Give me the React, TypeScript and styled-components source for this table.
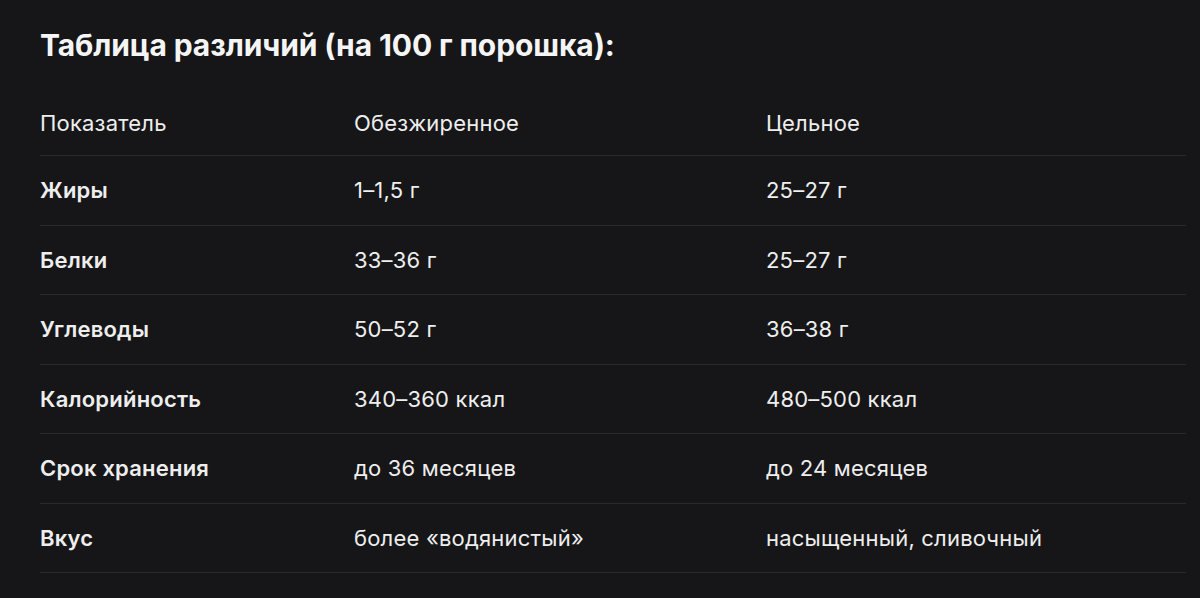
import { createGlobalStyle } from "styled-components";
import styled from "styled-components";

const GlobalStyle = createGlobalStyle`
  html, body {
    margin: 0;
    padding: 0;
    background: #161618;
  }
  body {
    font-family: Inter, "Noto Sans", sans-serif;
    color: #f0f0f0;
  }
`;

const Page = styled.div`
  padding: 25px 14px 0 40px;
  min-height: 598px;
  box-sizing: border-box;
`;

const Title = styled.h2`
  margin: 0;
  font-size: 30px;
  font-weight: 700;
  line-height: 40px;
  color: #f5f5f5;
  letter-spacing: -0.1px;
`;

const Row = styled.div`
  display: grid;
  grid-template-columns: 314px 412px 1fr;
  align-items: center;
  height: 69.5px;
  border-bottom: 1px solid #2a2a2d;
  box-sizing: border-box;
`;

const HeadRow = styled(Row)`
  height: 91px;
  padding-top: 25px;
`;

interface CellProps {
  $bold?: boolean;
}

const Cell = styled.div<CellProps>`
  font-size: 22px;
  line-height: 30px;
  letter-spacing: 0.2px;
  font-weight: ${(p) => (p.$bold ? 600 : 400)};
  color: #eeeeee;
`;

const rows: [string, string, string][] = [
  ["Жиры", "1–1,5 г", "25–27 г"],
  ["Белки", "33–36 г", "25–27 г"],
  ["Углеводы", "50–52 г", "36–38 г"],
  ["Калорийность", "340–360 ккал", "480–500 ккал"],
  ["Срок хранения", "до 36 месяцев", "до 24 месяцев"],
  ["Вкус", "более «водянистый»", "насыщенный, сливочный"],
];

export default function App() {
  return (
    <>
      <GlobalStyle />
      <Page>
        <Title>Таблица различий (на 100 г порошка):</Title>
        <HeadRow>
          <Cell>Показатель</Cell>
          <Cell>Обезжиренное</Cell>
          <Cell>Цельное</Cell>
        </HeadRow>
        {rows.map(([name, skim, whole]) => (
          <Row key={name}>
            <Cell $bold>{name}</Cell>
            <Cell>{skim}</Cell>
            <Cell>{whole}</Cell>
          </Row>
        ))}
      </Page>
    </>
  );
}
